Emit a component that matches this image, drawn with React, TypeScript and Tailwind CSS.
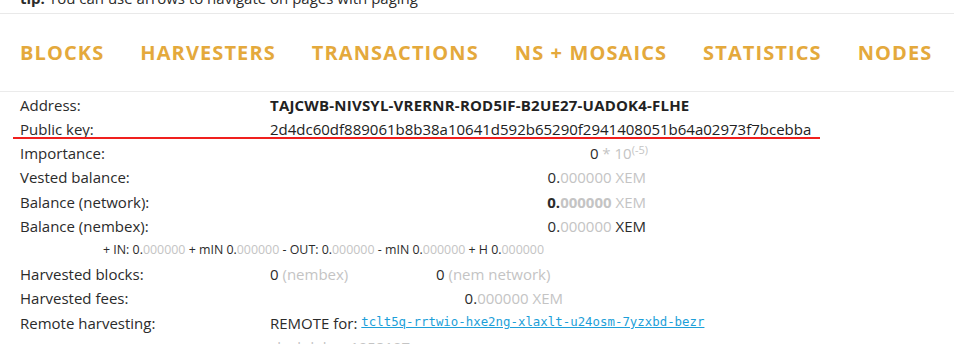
import React from "react";

const grey = "text-[#c4c4c4]";

function Row({ label, children, bold }: { label: string; children?: React.ReactNode; bold?: boolean }) {
  return (
    <div className="flex h-[24.2px] items-center">
      <div className="w-[250px] shrink-0">{label}</div>
      <div className={"flex-1 flex items-center " + (bold ? "font-bold" : "")}>{children}</div>
    </div>
  );
}

export default function App() {
  const nav = ["BLOCKS", "HARVESTERS", "TRANSACTIONS", "NS + MOSAICS", "STATISTICS", "NODES"];
  return (
    <div className="w-[954px] h-[344px] overflow-hidden bg-white text-[#2b2b2b]" style={{ fontFamily: '"Open Sans", sans-serif' }}>
      <div className="h-[14px] overflow-hidden border-b border-[#e9e9e9]">
        <div className="pl-[20px] text-[15px] leading-[20px] -mt-[12px]">
          <span className="font-bold">tip:</span> You can use arrows to navigate on pages with paging
        </div>
      </div>
      <div className="h-[78px] border-b border-[#ebebeb] flex items-center pl-[20px] gap-[36px] pt-[1px]">
        {nav.map((n) => (
          <span key={n} className="text-[20px] font-bold tracking-[1.1px] text-[#e4a93c] leading-none">
            {n}
          </span>
        ))}
      </div>
      <div className="relative pl-[20px] pt-[1px] text-[15px]">
        <div className="absolute left-[13px] top-[45px] w-[807px] h-[2px] bg-[#f0201e]" />
        <Row label="Address:">
          <span className="font-bold text-[15px] tracking-[0.2px] text-[#222]">TAJCWB-NIVSYL-VRERNR-ROD5IF-B2UE27-UADOK4-FLHE</span>
        </Row>
        <Row label="Public key:">
          <span className="text-[#222]">2d4dc60df889061b8b38a10641d592b65290f2941408051b64a02973f7bcebba</span>
        </Row>
        <Row label="Importance:">
          <div className="w-[378px] text-right">
            0<span className={grey}> * 10<sup className="text-[11px]">(-5)</sup></span>
          </div>
        </Row>
        <Row label="Vested balance:">
          <div className="w-[376px] text-right">
            0.<span className={grey}>000000 XEM</span>
          </div>
        </Row>
        <Row label="Balance (network):">
          <div className="w-[376px] text-right">
            <span className="font-bold">0.</span>
            <span className={grey + " font-bold"}>000000</span>
            <span className={grey}> XEM</span>
          </div>
        </Row>
        <Row label="Balance (nembex):">
          <div className="w-[376px] text-right">
            0.<span className={grey}>000000</span> XEM
          </div>
        </Row>
        <div className="flex h-[24.2px] items-center pl-[83px] text-[12.4px]">
          <span>
            + IN: 0.<span className={grey}>000000</span> + mIN 0.<span className={grey}>000000</span> - OUT: 0.
            <span className={grey}>000000</span> - mIN 0.<span className={grey}>000000</span> + H 0.
            <span className={grey}>000000</span>
          </span>
        </div>
        <Row label="Harvested blocks:">
          <span>
            0 <span className={grey}>(nembex)</span>
          </span>
          <div className="absolute left-[436px]">
            0 <span className={grey}>(nem network)</span>
          </div>
        </Row>
        <Row label="Harvested fees:">
          <div className="w-[293px] text-right">
            0.<span className={grey}>000000 XEM</span>
          </div>
        </Row>
        <Row label="Remote harvesting:">
          <span>REMOTE for:&nbsp;</span>
          <span
            className="text-[12.4px] text-[#1d9fd9] underline"
            style={{ fontFamily: '"DejaVu Sans Mono", monospace' }}
          >
            tclt5q-rrtwio-hxe2ng-xlaxlt-u24osm-7yzxbd-bezr
          </span>
        </Row>
        <Row label="">
          <span className={grey}>clockdelay: 1058107</span>
        </Row>
      </div>
    </div>
  );
}
